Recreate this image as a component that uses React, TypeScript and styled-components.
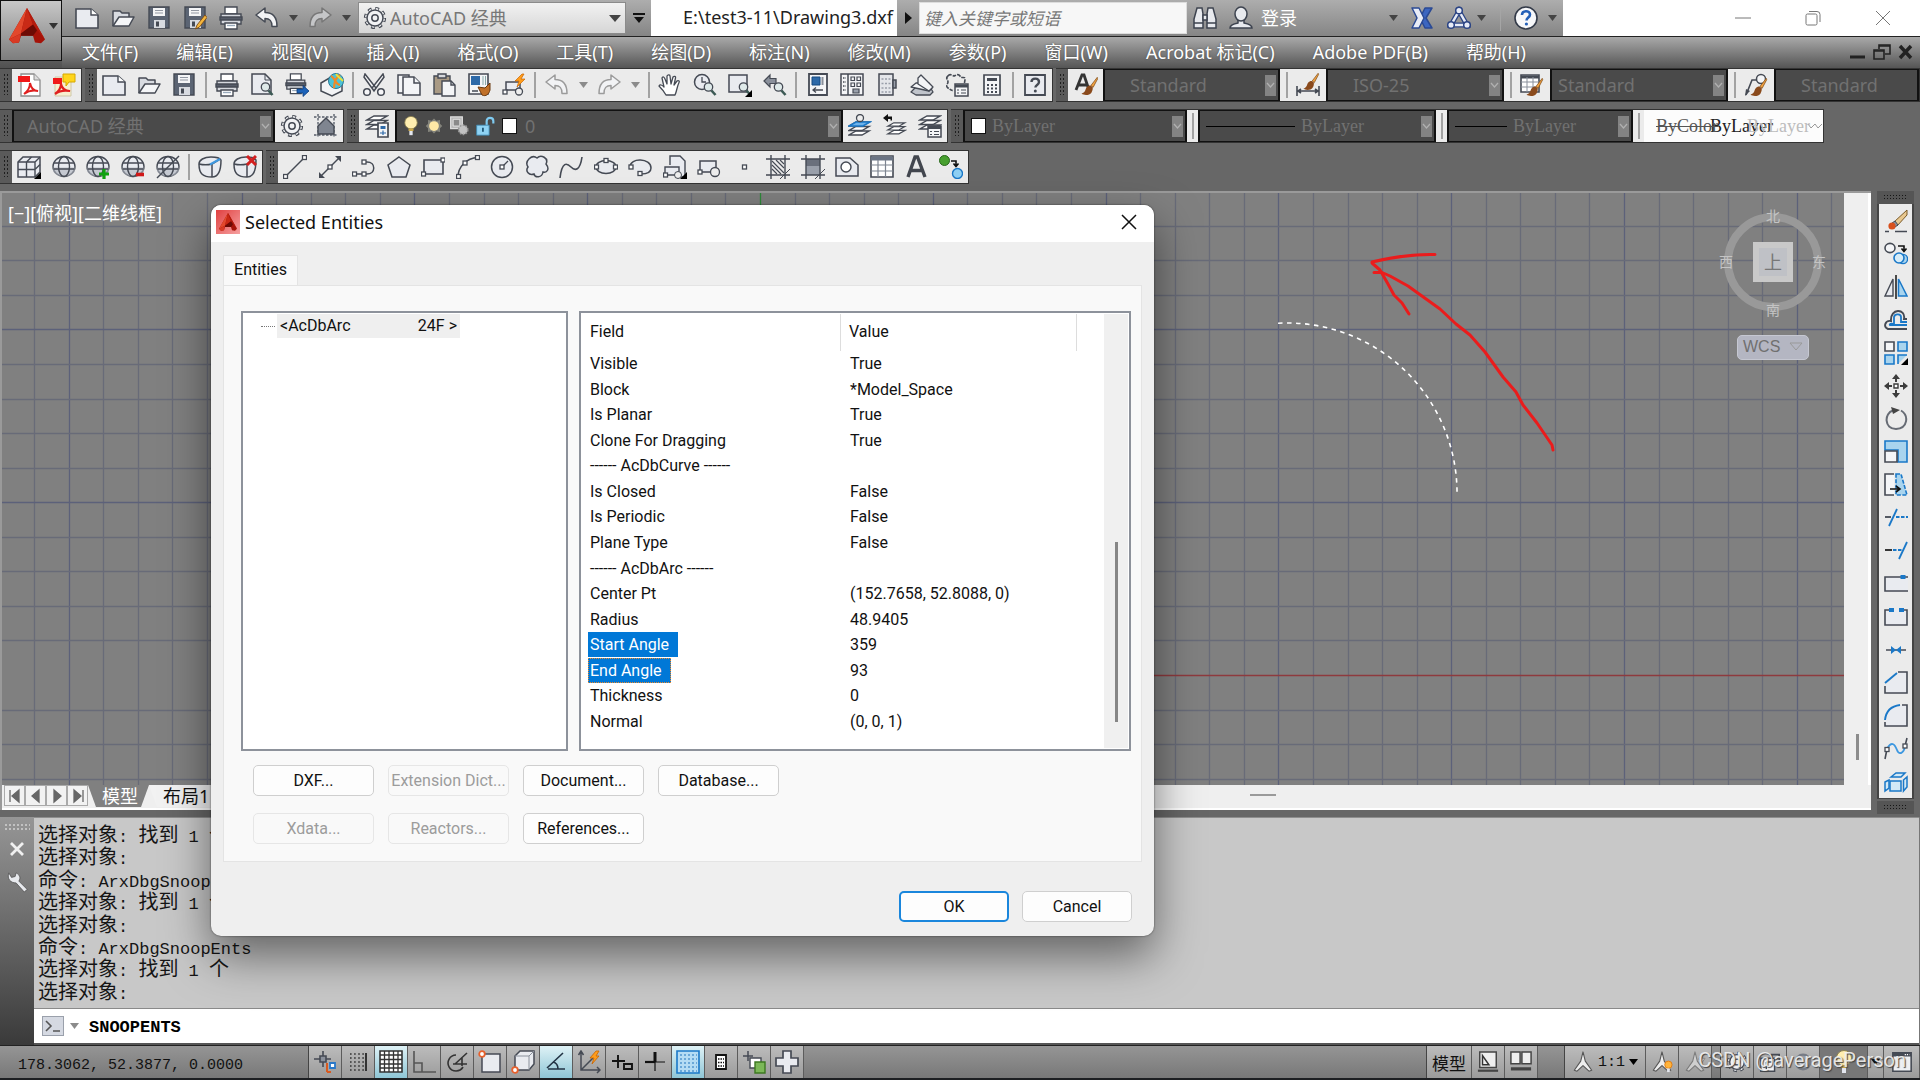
import React from "react";
import styled, { createGlobalStyle, css } from "styled-components";

const UI = `"Noto Sans", "Noto Sans CJK SC", sans-serif`;
const DLG = `Roboto, "Noto Sans CJK SC", sans-serif`;
const MONO = `"Liberation Mono", "Noto Sans CJK SC", monospace`;
const SERIF = `"Liberation Serif", "Noto Sans CJK SC", serif`;

const GlobalStyle = createGlobalStyle`
  * { box-sizing: border-box; }
  html, body { margin: 0; padding: 0; }
  body { background: #676767; font-family: ${UI}; overflow: hidden; }
  button, input, select { font: inherit; color: inherit; margin: 0; padding: 0; border: 0; background: none; border-radius: 0; }
  button { cursor: pointer; }
  svg { display: block; flex: none; }
`;

/* ---------- icon artwork, 24 x 24 ---------- */

const K = "#454a54";
const F = "#e9ebf0";
const B = "#1a78c8";
const LB = "#a9d4ee";
const sq = (x: number, y: number, s = 4) => (
  <rect x={x - s / 2} y={y - s / 2} width={s} height={s} fill="#fff" stroke={K} strokeWidth="1.3" />
);
const lens = (
  <g>
    <circle cx="15.5" cy="14" r="4.2" fill="#dfeaea" stroke={K} strokeWidth="1.3" />
    <path d="M18.5 17.5l4 4.5" stroke="#3d5a55" strokeWidth="2.6" />
  </g>
);
const corner = <path d="M24 17v7h-7z" fill="#000" />;
const brush = (
  <g>
    <path d="M22.5 1.5l-7 9 2.5 2L23 3z" fill="#f0a040" stroke="#7a4a18" strokeWidth=".8" />
    <path d="M15 10.500c-4 0-5 3-6 6-1 2-3 3-4 3 3 2.500 9 2 11-1 1.500-2.500 1.500-4 1.500-6z" fill="#8a4a1c" />
  </g>
);
const sphere = (
  <g fill="none" stroke={K} strokeWidth="1.4">
    <ellipse cx="12" cy="11.500" rx="11" ry="10" fill={F} />
    <path d="M1 12.500h22v4c-3 4-7 5-11 5s-8-1-11-5z" fill="#aeb3bd" stroke="none" opacity=".6" />
    <ellipse cx="12" cy="11.500" rx="5.500" ry="10" />
    <path d="M2 8h20M1.500 14h21" />
  </g>
);
const page = (
  <g>
    <path d="M1 3h15l7 6v13H1z" fill={F} stroke={K} strokeWidth="1.6" />
    <path d="M16 3v6h7" fill="#fff" stroke={K} strokeWidth="1.400" />
  </g>
);
const floppy = (
  <g>
    <path d="M2 1h20v21H2z" fill="#5b6473" stroke={K} strokeWidth="1.400" />
    <path d="M6 2h12v8H6z" fill="#f3f4f6" />
    <path d="M8 4.500h8M8 7h8" stroke="#9298a3" />
    <path d="M7 14h11v8H7z" fill="#d8dbe1" />
    <path d="M9 15.500h3v5H9z" fill={K} />
  </g>
);
const printer = (
  <g stroke={K} strokeWidth="1.400">
    <path d="M6 1h12v7H6z" fill="#fff" />
    <path d="M2 8h20v10H2z" fill="#d5d8de" />
    <path d="M1 11h22v3H1z" fill="#565c68" />
    <path d="M6 17h12v6H6z" fill="#fff" />
    <path d="M8 19.500h8" stroke="#9ab" />
  </g>
);
const layers = (
  <g fill="#fff" stroke={K} strokeWidth="1.400">
    <path d="M1 21h13l7-4H8z" />
    <path d="M1 16.500h13l7-4H8z" />
    <path d="M1 12h13l7-4H8z" />
  </g>
);
const person = (
  <path d="M12 1l2.500 10 7 10-3 1-6.500-6-6.500 6-3-1 7-10z" fill="#eee" stroke="#555" strokeWidth="1.200" strokeLinejoin="round" />
);
const gear = (
  <g fill="none" stroke={K}>
    <circle cx="12" cy="12" r="9.600" strokeWidth="3" strokeDasharray="3.800 3.740" />
    <circle cx="12" cy="12" r="8" fill="#f1f2f4" strokeWidth="1.500" />
    <circle cx="12" cy="12" r="9.300" stroke="#f1f2f4" strokeWidth="1.300" strokeDasharray="2.400 4.900" strokeDashoffset="-.7" />
    <circle cx="12" cy="12" r="3.200" strokeWidth="1.500" />
  </g>
);
const cube = (
  <g fill={F} stroke={K} strokeWidth="1.500" strokeLinejoin="round">
    <path d="M1 9c0-4 5-7 12-7 5 0 9 1 10 3 0 8-2 17-9 17C5 22 1 19 1 9z" />
    <path d="M1 9c4 1 9 1 13 0v13M14 9l8-5" fill="none" />
  </g>
);
const hatchFrame = <path d="M5 0v24M19 0v24M0 4h24M0 20h24" stroke={K} strokeWidth="1.400" fill="none" />;

const icons: Record<string, React.ReactNode> = {
  page, floppy, printer, gear, sphere,
  folder: (
    <g stroke={K} strokeWidth="1.500" strokeLinejoin="round">
      <path d="M2 20V5h7l2 2h7v4" fill="#d8dbe1" />
      <path d="M2 20l6-9h15l-5 9z" fill="#f4f5f7" />
    </g>
  ),
  saveAs: <g>{floppy}<path d="M22 9l-8 10-1.500 4 4-2 7.500-9.500z" fill="#f4b63c" stroke="#7a4a18" strokeWidth=".9" /></g>,
  undo: <path d="M1 9l9-7v4.500c8 0 12 4 12 14h-5c0-6-2-8-7-8V16z" fill="#f2f3f5" stroke={K} strokeWidth="1.500" strokeLinejoin="round" />,
  redo: <path d="M23 9l-9-7v4.500c-8 0-12 4-12 14h5c0-6 2-8 7-8V16z" fill="#c5c6c8" stroke="#777" strokeWidth="1.500" strokeLinejoin="round" />,
  undoOff: <path d="M1 9l9-7v4.500c8 0 12 4 12 14h-5c0-6-2-8-7-8V16z" fill="#f2f3f5" stroke="#9b9b9b" strokeWidth="1.500" strokeLinejoin="round" />,
  redoOff: <path d="M23 9l-9-7v4.500c-8 0-12 4-12 14h5c0-6 2-8 7-8V16z" fill="#f2f3f5" stroke="#9b9b9b" strokeWidth="1.500" strokeLinejoin="round" />,
  binoculars: (
    <g fill="#e8eaee" stroke="#3d434f" strokeWidth="1.500">
      <path d="M4 2h5l1 6v14H1v-9zM20 2h-5l-1 6v14h9v-9z" />
      <path d="M10 9h4v5h-4zM1 17h9M14 17h9" />
    </g>
  ),
  user: (
    <g fill="#e8eaee" stroke="#3d434f" strokeWidth="1.500">
      <path d="M1 22c0-3 3-4 8-5v-3h6v3c5 1 8 2 8 5z" />
      <ellipse cx="12" cy="8" rx="6" ry="7" />
    </g>
  ),
  exchange: (
    <g strokeLinejoin="round">
      <path d="M15 2h7l-6 10 6 10h-7l-5-10z" fill="#3c66c0" stroke="#2b4a94" strokeWidth="1.500" />
      <path d="M2 2h7l5 10-5 10H2l5-10z" fill="#e8ecf6" stroke="#2b4a94" strokeWidth="1.500" />
    </g>
  ),
  a360: (
    <g fill="#e8ecf6" stroke="#2b4484" strokeWidth="1.500">
      <path d="M12 5L4 19h16z" fill="none" strokeWidth="5" />
      <path d="M12 5L4 19h16z" fill="none" stroke="#e8ecf6" strokeWidth="2.500" />
      <circle cx="12" cy="4.500" r="3.300" /><circle cx="4" cy="19" r="3.300" /><circle cx="20" cy="19" r="3.300" />
    </g>
  ),
  help: (
    <g>
      <ellipse cx="12" cy="12" rx="11" ry="11" fill="#f7f8fa" stroke="#333a48" strokeWidth="1.600" />
      <path d="M8 9c0-5 8-5 8-.5 0 3-3.500 3-3.500 6" fill="none" stroke="#2460b8" strokeWidth="2.600" />
      <circle cx="12.400" cy="18" r="1.600" fill="#2460b8" />
    </g>
  ),
  helpBox: (
    <g>
      <path d="M2 2h20v20H2z" fill={F} stroke={K} strokeWidth="1.800" />
      <path d="M8.500 9c0-4.500 7.500-4.500 7.500 0 0 3-3.600 3-3.600 5.500" fill="none" stroke={K} strokeWidth="2.400" />
      <circle cx="12.300" cy="18" r="1.500" fill={K} />
    </g>
  ),
  pdf: (
    <g>
      <path d="M4 1h13l6 6v16H4z" fill="#fff" stroke="#8c8c8c" strokeWidth="1.300" />
      <path d="M17 1v6h6" fill="#ddd" stroke="#8c8c8c" />
      <path d="M1 3h12v6H1z" fill="#f01818" />
      <path d="M7 21c4-3 6-7 6-11 1 5 4 8 8 8-5-1-10 0-14 3z" fill="none" stroke="#e02020" strokeWidth="2" />
    </g>
  ),
  pdfNote: (
    <g>
      <path d="M3 4h16v19H3z" fill="#f7efcf" stroke="#cfc8a8" />
      <path d="M1 5h9v6H1z" fill="#f01818" />
      <path d="M3 21c4-3 6-6 6-10 1 5 4 7 9 7-5-1-11 0-15 3z" fill="none" stroke="#e02020" strokeWidth="2.200" />
      <path d="M11 1h12v8h-6l-3 4V9h-3z" fill="#ffd51c" stroke="#d6a800" />
    </g>
  ),
  preview: <g><path d="M2 1h13l6 6v14H2z" fill={F} stroke={K} strokeWidth="1.500" /><path d="M15 1v6h6" fill="none" stroke={K} />{lens}</g>,
  publish: <g><g transform="scale(.9)">{printer}</g><path d="M12 16h6v-3.500l6 5.500-6 5.500V20h-6z" fill="#1c62b8" stroke="#0d3c7c" strokeWidth=".8" /></g>,
  web: (
    <g>
      <path d="M1 10l10-6 11 5v9l-10 5-11-5z" fill="#f3f4f6" stroke={K} strokeWidth="1.500" />
      <circle cx="16" cy="8" r="7.500" fill="#4cc3d8" stroke="#2a7896" />
      <path d="M11 3c4 2 4 8 9 9M20 2c-5 3-6 8-6 13" stroke="#f08a28" strokeWidth="2.200" fill="none" />
      <path d="M16 1c2 3 5 5 7 7" stroke="#e8e23a" strokeWidth="2" fill="none" />
    </g>
  ),
  cut: (
    <g stroke={K} strokeWidth="1.500" fill="#f6f6f8">
      <path d="M3 1l11 14-2 3L2 4zM21 1L10 15l2 3L22 4z" />
      <circle cx="5" cy="19" r="3.300" /><circle cx="19" cy="19" r="3.300" />
    </g>
  ),
  copy: (
    <g fill="#f4f5f7" stroke={K} strokeWidth="1.500">
      <path d="M1 2h11v18H1z" /><path d="M6 4h11l6 6v12H6z" /><path d="M17 4v6h6" />
    </g>
  ),
  paste: (
    <g stroke={K} strokeWidth="1.400">
      <path d="M2 3h16v18H2z" fill="#a99a84" /><path d="M6 1h8v4H6z" fill="#d6d8dc" />
      <path d="M10 8h9l4 4v11H10z" fill="#f4f5f7" /><path d="M19 8v4h4" fill="none" />
    </g>
  ),
  match: (
    <g>
      <path d="M2 1h19v20H2z" fill="#f4f5f7" stroke={K} strokeWidth="1.600" />
      <path d="M4 3h9v9H4z" fill="#2d69a8" /><path d="M16 3v9M18.500 3v9" stroke="#8aa" />
      <path d="M5 18h6" stroke={K} strokeWidth="1.500" />
      <path d="M23 10l-5 5-7-1 4 8c4 2 7-1 8-5z" fill="#c07028" stroke="#6b3a10" />
    </g>
  ),
  blockEdit: (
    <g>
      <path d="M4 9h14v8H4z" fill={F} stroke={K} strokeWidth="1.500" />{sq(3, 19)}
      <circle cx="17" cy="18.500" r="3.500" fill="#eee" stroke={K} strokeWidth="1.300" />
      <path d="M20 1l-7 7h4l-2 6 8-8h-4l3-5z" fill="#ff9d1c" stroke="#c86400" strokeWidth=".7" />
    </g>
  ),
  hand: <path d="M8 22c-2-4-5-7-7-9 1-2 3-1 5 1L4 5c1-2 2-1 3 1l2 5V3c1-2 3-1 3 0l1 8 2-7c1-1 3-1 2.500 1L16 12l3-4c1-1 3 0 2 1.500-2 4-2 8-4 12.500z" fill="#fff" stroke={K} strokeWidth="1.300" strokeLinejoin="round" />,
  zoomRt: <g><circle cx="9" cy="9" r="7.500" fill={F} stroke={K} strokeWidth="1.500" /><path d="M9 4v5h4" fill="none" stroke={K} strokeWidth="1.300" />{lens}</g>,
  zoomWin: <g><path d="M1 2h18v17H1z" fill={F} stroke={K} strokeWidth="1.500" />{lens}{corner}</g>,
  zoomPrev: <g><path d="M1 8l6-6v3.500h6v5H7V14z" fill="#8a909b" stroke={K} strokeWidth="1.200" />{lens}</g>,
  props: (
    <g>
      <path d="M3 1h18v21H3z" fill="#f4f5f7" stroke={K} strokeWidth="1.800" /><path d="M6 4h8v8H6z" fill="#2d69a8" stroke="#174a80" />
      <path d="M16.500 4v8" stroke="#8a909b" strokeWidth="2" /><path d="M7 17h10M10 14.500L7 17l3 2.500" fill="none" stroke={K} strokeWidth="1.300" />
    </g>
  ),
  dcenter: (
    <g fill="#f4f5f7" stroke={K} strokeWidth="1.500">
      <path d="M1 1h22v21H1z" /><path d="M8 1v21" /><path d="M3 5h3M3 9h3M3 13h3M3 17h3" strokeDasharray="1.500 1" />
      <path d="M11 4h3.500v3.500H11zM17 4h3.500v3.500H17zM11 10h3.500v3.500H11zM17 10h3.500v3.500H17z" strokeWidth="1.200" /><path d="M13 16h6v4h-6z" strokeWidth="1.200" fill="#9aa0ab" />
    </g>
  ),
  palettes: (
    <g stroke={K} fill="#e4e6ea" strokeWidth="1.500">
      <path d="M4 1h14v21H4z" /><path d="M18 7h3v8h-3z" fill="#9aa0ab" />
      <path d="M6.500 6h9M6.500 10.500h9M6.500 15h9M6.500 19h9" strokeDasharray="2 1.500" strokeWidth="1.700" stroke="#9aa0ab" />
    </g>
  ),
  sheets: (
    <g stroke={K} strokeWidth="1.300" fill="#f4f5f7" strokeLinejoin="round">
      <path d="M1 19l5-5h14l3 5-3 3H6z" fill="#c0c4cb" /><path d="M1 14l5-4h13l3 5-3 3z" /><path d="M8 5l3-3 12 12-4 4-11-7z" />
    </g>
  ),
  markup: (
    <g>
      <path d="M3 3c2-3 5 0 6 0s4-3 6 0 5 0 5 3-1 3 0 5M3 3c-3 2 0 4 0 6s-3 4 0 6 3 3 6 2" fill="none" stroke={K} strokeWidth="1.600" strokeDasharray="4 1" />
      <path d="M10 11h13v12H10z" fill="#f4f5f7" stroke={K} strokeWidth="1.500" /><path d="M10 13h13" stroke={K} strokeWidth="3" />
      <path d="M12 17h2M16 17h5M12 20h2M16 20h5" stroke={K} strokeWidth="1.200" />
    </g>
  ),
  calc: (
    <g>
      <path d="M4 2h16v20H4z" fill="#f4f5f7" stroke={K} strokeWidth="1.700" /><path d="M7 5h10v3H7z" fill={K} />
      <path d="M7 12h10M7 15.500h10M7 19h10" stroke={K} strokeWidth="2" strokeDasharray="2 2" />
    </g>
  ),
  textStyle: (
    <g>
      <path d="M2 17L8 2h2l5 15M4 12h9" fill="none" stroke="#333" strokeWidth="2.800" />
      <g transform="translate(3 3) scale(.9)">{brush}</g>
    </g>
  ),
  dimStyle: (
    <g>
      <path d="M1 13v10M23 13v10M2 18h20M5 16l-3 2 3 2M19 16l3 2-3 2" fill="none" stroke={K} strokeWidth="1.600" />
      <g transform="translate(3 -1) scale(.85)">{brush}</g>
    </g>
  ),
  tableStyle: (
    <g>
      <path d="M1 2h18v17H1z" fill="#fff" stroke={K} strokeWidth="1.600" /><path d="M1 4h18" stroke={K} strokeWidth="3" />
      <path d="M1 9h18M1 14h18M7 4v15M13 4v15" stroke="#8a909b" />
      <g transform="translate(2 4) scale(.9)">{brush}</g>
    </g>
  ),
  leaderStyle: (
    <g>
      <path d="M2 22L8 7h5" fill="none" stroke={K} strokeWidth="1.600" /><path d="M1 23l1-7 4 2z" fill={K} /><circle cx="17" cy="6" r="4.500" fill="#f4f5f7" stroke={K} strokeWidth="1.500" />
      <g transform="translate(2 4) scale(.9)">{brush}</g>
    </g>
  ),
  home: (
    <g>
      <path d="M4 0v24M20 0v24M0 3h24M0 21h24" stroke="#7b8089" strokeWidth="1.800" strokeDasharray="2.500 1.500" />
      <path d="M4 12l8-8 8 8v8H4z" fill="#7f8590" stroke={K} strokeWidth="1.400" />
    </g>
  ),
  layerProps: (
    <g>
      <g transform="translate(1 -6)">{layers}</g>
      <path d="M13 9h10v14H13z" fill="#f4f5f7" stroke={K} strokeWidth="1.700" /><path d="M15.500 12h5v3h-5z" fill="#2d69a8" /><path d="M15 19h6M18 16.500v4.500" stroke="#2d69a8" strokeWidth="1.200" />
    </g>
  ),
  layerCurrent: (
    <g>{layers}<path d="M1 12h14l7-4H8z" fill="#6db2ea" stroke={B} strokeWidth="1.500" /><circle cx="12" cy="4" r="3.500" fill="#eee" stroke={K} strokeWidth="1.300" /></g>
  ),
  layerPrev: <g><g transform="translate(4 2) scale(.85)">{layers}</g><path d="M0 4l5-4v2.500h4v4H7.500V5H5v3z" fill="#111" /></g>,
  layerState: (
    <g>
      <g transform="translate(1 -6)">{layers}</g>
      <path d="M10 12h13v11H10z" fill="#f4f5f7" stroke={K} strokeWidth="1.500" /><path d="M10 13.500h13" stroke={K} strokeWidth="3" /><path d="M12 17.500h2M16 17.500h5M12 20.500h2M16 20.500h5" stroke={K} strokeWidth="1.200" />
    </g>
  ),
  bulb: (
    <g>
      <ellipse cx="12" cy="8" rx="7.500" ry="7.500" fill="#ffeeb0" stroke="#8d8250" /><path d="M9 15h6v3H9z" fill="#caa94c" /><path d="M10 18h4v5h-4z" fill="#e3e6ee" />
    </g>
  ),
  sun: <g><path d="M12 2l3 3 5-1v5l3 3-3 3v5l-5-1-3 3-3-3-5 1v-5l-3-3 3-3V4l5 1z" fill="#84847c" /><circle cx="12" cy="12" r="6.500" fill="#ffe9a6" /></g>,
  vpFreeze: (
    <g>
      <path d="M2 1h14v14H2z" fill="#b8b8b8" stroke="#ddd" strokeWidth="1.500" /><path d="M5 4h8v8H5z" fill="#8a8a8a" stroke="#eee" />
      <circle cx="17" cy="16.500" r="5.500" fill="#c2c2c2" stroke="#999" strokeDasharray="2 1.500" strokeWidth="2" />
    </g>
  ),
  unlock: (
    <g>
      <path d="M14 11V6c0-5 8-5 8 0v3" fill="none" stroke="#7fcaf0" strokeWidth="2.600" /><path d="M2 11h15v12H2z" fill="#8fd3f4" stroke="#3c88b0" /><path d="M9.500 14v5" stroke="#205878" strokeWidth="2.200" />
    </g>
  ),
  vportBox: (
    <g>
      <path d="M1 7l5-5h17v15l-5 5H1z" fill={F} stroke={K} strokeWidth="1.500" /><path d="M1 7h17v15M18 7l5-5M9.500 7v15M1 14.500h17M9.500 7l5-5M18 14.500l5-5" fill="none" stroke={K} strokeWidth="1.400" />{corner}
    </g>
  ),
  sphereAdd: <g>{sphere}<path d="M18 14v10M13 19h10" stroke="#10a010" strokeWidth="3.200" /></g>,
  sphereSub: <g>{sphere}<path d="M15 19.500h8" stroke="#d01818" strokeWidth="3.600" /></g>,
  sphereOff: <g>{sphere}<path d="M1 23L23 1" stroke={K} strokeWidth="1.500" /></g>,
  cubeBlue: <g>{cube}<path d="M12 9.500L22 4" stroke="#3e98e0" strokeWidth="2" /></g>,
  cubeDel: <g>{cube}<path d="M14 1l9 9M23 1l-9 9" stroke="#d32020" strokeWidth="3" /></g>,
  line: <g><path d="M3 21L21 3" stroke={K} strokeWidth="1.500" />{sq(2.500, 21.500)}{sq(21.500, 2.500)}</g>,
  ray: <g><path d="M2 22L22 2" stroke={K} strokeWidth="1.500" />{sq(12, 12)}<path d="M23 1v6l-6-6zM1 23v-6l6 6z" fill={K} /></g>,
  pline: <g><path d="M2 19h13c9 0 9-12 0-12h-3" fill="none" stroke={K} strokeWidth="1.500" />{sq(2.500, 19)}{sq(12, 19)}{sq(12, 7)}</g>,
  polygon: <path d="M12 2l11 8-4 12H5L1 10z" fill={F} stroke={K} strokeWidth="1.500" />,
  rect: <g><path d="M3 5h19v14H3z" fill={F} stroke={K} strokeWidth="1.600" />{sq(2.500, 19)}{sq(22, 5)}</g>,
  arc: <g><path d="M2 22C2 12 10 3 22 2.500" fill="none" stroke={K} strokeWidth="1.500" />{sq(2.500, 21.500)}{sq(9, 8)}{sq(21.500, 2.500)}</g>,
  circle: <g><circle cx="12" cy="12" r="10.500" fill={F} stroke={K} strokeWidth="1.500" /><path d="M12 12l6-6" stroke={K} strokeWidth="1.300" />{sq(12, 12)}</g>,
  cloud: <path d="M12 3c4-4 12 0 9 6 4 5 1 9-3 8-1 6-8 6-9 2-5 2-9-3-6-7-4-6 4-13 9-9z" fill={F} stroke={K} strokeWidth="1.500" />,
  spline: <path d="M1 23C3 6 8 8 12 12s9 4 11-10" fill="none" stroke={K} strokeWidth="1.600" />,
  ellipse: <g><ellipse cx="12" cy="12" rx="10" ry="6.500" fill={F} stroke={K} strokeWidth="1.500" />{sq(2.500, 12)}{sq(21.500, 12)}{sq(12, 5.500)}</g>,
  ellArc: <g><path d="M2 12c0-10 21-9 21 1 0 5-6 6-10 6" fill={F} stroke={K} strokeWidth="1.500" />{sq(3, 12)}{sq(12, 18.500)}</g>,
  insert: <g><path d="M7 10V1h10l5 5v16H12" fill={F} stroke={K} strokeWidth="1.400" /><path d="M2 12h14v8H2z" fill={F} stroke={K} strokeWidth="1.400" />{sq(2.500, 20)}<circle cx="15" cy="20" r="3.500" fill="#eee" stroke={K} />{corner}</g>,
  block: <g><path d="M3 6h16v11H3z" fill={F} stroke={K} strokeWidth="1.500" />{sq(3, 17)}<circle cx="18" cy="17" r="4.500" fill="#eee" stroke={K} strokeWidth="1.300" /></g>,
  point: <rect x="10.500" y="10" width="4" height="4" fill="#fff" stroke={K} strokeWidth="1.300" />,
  hatch: <g>{hatchFrame}<path d="M6 6l12 12M6 10l9 9M6 14l5 5M10 5l8 8M14 5l4 4" stroke={K} strokeWidth="1.100" /><path d="M24 14L14 24" stroke={K} /></g>,
  gradient: <g><path d="M5 4h14v16H5z" fill="#9aa0ab" /><path d="M5 4h14v7H5z" fill="#6a707c" />{hatchFrame}<path d="M24 14L14 24" stroke={K} /></g>,
  region: <g><path d="M1 3h14l8 7v11H1z" fill={F} stroke={K} strokeWidth="1.500" /><circle cx="11" cy="12" r="5" fill="#fff" stroke={K} strokeWidth="1.400" /></g>,
  table: <g><path d="M1 1h22v21H1z" fill="#fff" stroke={K} strokeWidth="1.600" /><path d="M1 3.500h22" stroke="#6b7484" strokeWidth="4" /><path d="M1 10h22M1 16h22M8 5v17M15.500 5v17" stroke="#7d8490" strokeWidth="1.200" /></g>,
  mtext: <path d="M4 22L11 2h2.500L21 22M7 15.500h11" fill="none" stroke="#43474f" strokeWidth="3.400" />,
  addSel: <g><circle cx="5.500" cy="5.500" r="5" fill="#48a030" stroke="#27661a" /><circle cx="18.500" cy="18.500" r="5" fill="#8fd0f4" stroke={B} strokeWidth="1.400" /><path d="M12 6h5v5M14.500 8.500l2.500 3 2.500-3" fill="none" stroke="#111" strokeWidth="1.600" /></g>,
  erase: <g><path d="M23 1L10 13l3 4L23 6z" fill="#e8c890" stroke="#7a5a28" /><path d="M11 12l-3 2 3 4 3-2z" fill="#8a909b" stroke={K} /><ellipse cx="8" cy="17" rx="3.600" ry="3.600" fill="#d8501c" /><path d="M1 22.500h4M11 22.500h12" stroke={K} strokeWidth="1.400" /></g>,
  copyObj: <g><ellipse cx="6" cy="6" rx="5" ry="4.600" fill="#f4f5f7" stroke={K} strokeWidth="1.600" /><circle cx="19" cy="17" r="4.600" fill={LB} stroke={B} strokeWidth="1.400" /><circle cx="15" cy="16" r="5" fill="#d6ecf8" stroke={B} strokeWidth="1.600" /><path d="M14 4h6v4M17.500 6.500L20 9.500l2.500-3" fill="none" stroke="#111" strokeWidth="1.600" /></g>,
  mirror: <g><path d="M9 4v17H1z" fill={F} stroke={K} strokeWidth="1.400" /><path d="M14.500 4v17H23z" fill={LB} stroke={B} strokeWidth="1.500" /><path d="M12 0v24" stroke="#222" strokeWidth="1.600" /></g>,
  offset: <g fill="none"><path d="M23 21H4c-5-2-3-9 3-8-1-13 15-13 13-2h3" stroke={K} strokeWidth="1.900" /><path d="M23 17H6c-1-1 1-2 4-1V9c1-4 7-3 7 0v5h6" stroke={B} strokeWidth="1.800" /></g>,
  array: <g strokeWidth="1.600"><path d="M1 1h9v9H1z" fill="#f4f5f7" stroke={K} /><path d="M14 1h9v9h-9zM1 14h9v9H1z" fill={LB} stroke={B} /><path d="M14 23v-9h9" fill={LB} stroke={B} /><path d="M24 17v7h-7z" fill="#000" /></g>,
  move: <g fill="#3c3c3c"><path d="M12 0l4 5h-3v3h-2V5H8zM12 24l4-5h-3v-3h-2v3H8zM0 12l5-4v3h3v2H5v3zM24 12l-5-4v3h-3v2h3v3z" /><path d="M10 10h4v4h-4z" fill="#fff" stroke="#3c3c3c" strokeWidth="1.400" /></g>,
  rotate: <g><path d="M17 3.500c8 5 7 18-5 18.500C0 22 0 6 9 3.500" fill="none" stroke="#666b74" strokeWidth="2" /><path d="M7 0l9 3-7 4z" fill="#444" /></g>,
  scale: <g strokeWidth="1.600"><path d="M1 1h22v21H14V10H1z" fill={LB} stroke={B} /><path d="M1 11h12v11H1z" fill="#f4f5f7" stroke={K} /></g>,
  stretch: <g strokeWidth="1.600"><path d="M10 1H1v21h9" fill="#f4f5f7" stroke={K} /><path d="M12 1h5l6 21H12z" fill={LB} stroke={B} strokeDasharray="4 1.500" /><path d="M6 16h9M12 13l4 3-4 3" fill="none" stroke="#111" /></g>,
  trim: <g strokeWidth="1.800" fill="none"><path d="M1 11h6" stroke={K} /><path d="M12 11h12" stroke={B} strokeDasharray="3.500 1.500" /><path d="M13 3L5 20" stroke={B} /></g>,
  extend: <g strokeWidth="1.800" fill="none"><path d="M1 11h7" stroke="#222" /><path d="M9 11h9" stroke={B} strokeDasharray="3.500 1.500" /><path d="M23 3l-8 17" stroke={B} /></g>,
  breakPt: <g><path d="M24 5H1v14h23" fill={F} stroke={K} strokeWidth="1.600" /><path d="M16.500 3h5v4h-5z" fill={B} /></g>,
  breakObj: <g><path d="M5 5H1v15h22V5h-4" fill={F} stroke={K} strokeWidth="1.600" /><path d="M5 3h5v4H5zM15 3h5v4h-5z" fill={B} /></g>,
  join: <g><path d="M2 12h20" stroke={K} strokeWidth="1.500" /><path d="M7 8l5 4-5 4zM17 8l-5 4 5 4z" fill={B} /></g>,
  chamfer: <g><path d="M14 1h9v21H1v-7L14 3z" fill={F} /><path d="M14 1h9v21H1v-7" fill="none" stroke={K} strokeWidth="1.600" /><path d="M1 12L13 2" stroke={B} strokeWidth="1.900" /></g>,
  fillet: <g><path d="M16 1h7v21H1v-5C2 8 8 2 16 1z" fill={F} /><path d="M18 1h5v21H1v-4" fill="none" stroke={K} strokeWidth="1.600" /><path d="M1 16C2 7 8 2 16 1" fill="none" stroke={B} strokeWidth="1.900" /></g>,
  blend: <g fill="none"><path d="M1 22l2-10M21 9l2-8" stroke={K} strokeWidth="1.600" /><path d="M3 12c5-9 8-4 10 1s6 4 8-3" stroke="#3e98e0" strokeWidth="1.900" />{sq(3, 12.500)}{sq(21, 9)}</g>,
  explode: <g fill="#d3e9f6" stroke={B} strokeWidth="1.500"><path d="M1 12l4-2v8l-4 3zM19.500 10l3.500-3v10l-3.500 4zM7 7l5-4h9l-4 4z" /><path d="M6 11h11v10H6z" /></g>,
  snapInfer: <g fill="none"><path d="M10 1v16M1 9h17" stroke={K} strokeWidth="1.600" /><path d="M7 6h6v6H7z" stroke={K} strokeWidth="1.600" fill="#8a909b" /><path d="M14 22v-9M14 22h4" stroke="#d85a20" strokeWidth="2" /><path d="M17 13h5v5h-5z" stroke="#2a78c8" strokeWidth="1.800" fill="#fff" /></g>,
  snapMode: <g><path d="M4 4h14M4 8h14M4 12h14M4 16h14M4 20h14" stroke="#333" strokeWidth="1.600" strokeDasharray="1.600 2.500" /><path d="M20 3v18" stroke="#333" strokeWidth="2" /></g>,
  gridMode: <g><path d="M1 1h22v21H1z" fill="#fff" stroke="#333" strokeWidth="1.600" /><path d="M5.500 1v21M10 1v21M14.500 1v21M19 1v21M1 5h22M1 9.500h22M1 14h22M1 18h22" stroke="#333" strokeWidth="1.300" /></g>,
  ortho: <path d="M2 1v21h22M2 13h8v9" fill="none" stroke="#555" strokeWidth="1.600" />,
  polar: <g fill="none" stroke="#333" strokeWidth="1.600"><path d="M11 5a8 8 0 1 0 7 12" /><path d="M10 14L22 3M8 14h14M17 7v9" /></g>,
  osnap: <g><path d="M4 4h18v18H4z" fill={F} stroke={K} strokeWidth="1.500" /><circle cx="4" cy="4" r="2.800" fill="#fff" stroke="#e8602c" strokeWidth="1.800" /></g>,
  osnap3d: <g><path d="M4 6l5-5h14v13l-5 6H4z" fill={F} stroke={K} strokeWidth="1.500" /><path d="M4 6h14v14M18 6l5-5" fill="none" stroke="#8a909b" /><circle cx="4" cy="20" r="2.800" fill="#fff" stroke="#e8602c" strokeWidth="1.800" /></g>,
  otrack: <path d="M3 18L19 3M4 19h17M9 12c4 1 5 4 5 7" fill="none" stroke="#234" strokeWidth="1.600" />,
  ducs: <g fill="none"><path d="M4 2v18h19M4 20L16 8M1.500 5L4 1l2.500 4M20 17l3 3-3 3" stroke={K} strokeWidth="1.500" /><path d="M19 1l-6 7h4l-2 6 7-8h-3l3-5z" fill="#ff9d1c" stroke="#c86400" strokeWidth=".8" /></g>,
  dyn: <path d="M8 5v13M2 11h13M14 14h8v5h-8z" fill="none" stroke="#111" strokeWidth="1.900" />,
  lwt: <g fill="none" stroke="#111"><path d="M12 2v10" strokeWidth="3" /><path d="M12 12v9M12 12h10" strokeWidth="1.200" /><path d="M2 12h10" strokeWidth="2.200" /></g>,
  transp: <g><path d="M1 1h22v22H1z" fill="#b4dcf4" stroke={B} strokeWidth="1.600" /><path d="M4 5h17M4 9h17M4 13h17M4 17h17M4 21h17" stroke="#6aa8d8" strokeWidth="2" strokeDasharray="2 2" /></g>,
  quickProps: <g><path d="M7 5h10v14H7z" fill="#fff" stroke="#111" strokeWidth="1.800" /><path d="M9 9h6M9 12.500h6M9 16h6" stroke="#111" strokeWidth="1.700" strokeDasharray="1.500 1" /></g>,
  selCycle: <g><path d="M6 1v10M1 6h10" stroke={K} strokeWidth="1.500" /><path d="M8 8h11v10H8z" fill="#fff" stroke={K} strokeWidth="1.400" /><path d="M13 12h10v11H13z" fill="#7cb858" stroke="#3c7820" strokeWidth="1.400" /></g>,
  annoMon: <path d="M8 1h8v7h7v8h-7v7H8v-7H1V8h7z" fill={F} stroke={K} strokeWidth="1.700" />,
  layoutBtn: <g><path d="M3 1h18v17H3z" fill="#eee" stroke="#444" strokeWidth="1.600" /><path d="M6 5v10h7z" fill="none" stroke="#333" strokeWidth="1.600" /><path d="M1 21.500h22" stroke="#444" strokeWidth="2.400" /></g>,
  qview: <g><path d="M1 1h10v13H1zM13 1h10v13H13z" fill="#eee" stroke="#444" strokeWidth="1.600" /><path d="M1 19.500h22" stroke="#444" strokeWidth="3.500" /></g>,
  person,
  personSun: <g>{person}<circle cx="19" cy="15" r="4" fill="#ffb43c" stroke="#e07a10" /><path d="M17.500 19h3v4h-3z" fill="#e3e6ee" /></g>,
  personOff: <g opacity=".55">{person}<path d="M20 3l-4 6h3l-1 6 5-7h-3z" fill="#ddd" stroke="#666" /></g>,
  lockUi: <g><path d="M2 8h15v14H2z" fill="#f4f5f7" stroke={K} strokeWidth="1.600" /><path d="M8 12h6M8 12v8" stroke={K} strokeWidth="1.500" /><path d="M14 8V4h8v8" fill="none" stroke={K} strokeWidth="1.800" /></g>,
  hardware: <g><circle cx="12" cy="12" r="8" fill="#9aa0a8" stroke="#777c86" strokeWidth="2.500" /><path d="M8 12l3 4 6-8" stroke="#ccd0d6" strokeWidth="2" fill="none" /></g>,
  cleanScreen: <g><path d="M2 2h20v20H2z" fill="#eef0f3" stroke={K} strokeWidth="1.700" /><path d="M2 4h20" stroke={K} strokeWidth="4" /><path d="M15 4h5" stroke="#fff" strokeWidth="1.500" strokeDasharray="1.300 1" /></g>,
  wrench: <path d="M3 2l3 5 4-1 1-4c5 3 5 6 3 9l9 9-3 3-9-10C5 13 1 9 3 2z" fill="#e8eaee" stroke="#4b4b4b" strokeWidth=".8" />,
};

const Icon = ({ name, size = 24 }: { name: string; size?: number }) => (
  <svg width={size} height={size} viewBox="0 0 24 24" aria-hidden="true">{icons[name]}</svg>
);

const Logo = ({ size }: { size: number }) => (
  <svg width={size} height={size} viewBox="0 0 36 48" preserveAspectRatio="none" aria-hidden="true">
    <path d="M18 0L36 42l-4 5-6-1-2-9H12l-2 9-6 1-4-5z" fill="#a51208" />
    <path d="M18 0L0 42l12-8z" fill="#e2482c" />
    <path d="M18 0l-6 34 12-12z" fill="#c92a16" />
    <path d="M18 0l6 22 12 20z" fill="#b41c0e" />
    <path d="M12 34l12-12 4 8-4 7H12z" fill="#6c0a04" />
    <path d="M0 42l12-8-2 12-6 1z" fill="#d83a24" />
  </svg>
);

/* ---------- page and header ---------- */

const Page = styled.div`
  position: relative;
  display: flex;
  flex-direction: column;
  height: 100vh;
  background: #676767;
`;
const Header = styled.header`
  display: grid;
  grid-template-columns: 62px 1fr;
  grid-template-rows: 37px 31px;
  background: linear-gradient(#b0b0b0, #505050);
`;
const AppButton = styled.button`
  grid-row: 1 / 3;
  display: flex;
  align-items: center;
  justify-content: center;
  gap: 4px;
  height: 61px;
  padding: 0 0 10px 4px;
  border: 1px solid #111;
  background: linear-gradient(#c8c8c8, #7d7d7d);
`;
const TitleBar = styled.div`
  display: flex;
  height: 37px;
  border-bottom: 1px solid #222;
  background: linear-gradient(#adadad, #858585);
`;
const QuickAccess = styled.div`
  display: flex;
  align-items: center;
  padding: 0 3px 0 7px;
`;
const QuickButton = styled.button<{ $w?: number }>`
  display: flex;
  align-items: center;
  justify-content: center;
  width: ${(p) => p.$w ?? 36}px;
  height: 36px;
`;
const WorkspaceBox = styled.label`
  display: flex;
  align-items: center;
  width: 268px;
  height: 32px;
  margin-top: 2px;
  padding: 0 4px;
  gap: 3px;
  background: linear-gradient(#f2f2f2, #d6d6d6);
  border: 1px solid #8b8b8b;
`;
const WorkspaceSelect = styled.select`
  appearance: none;
  flex: 1;
  height: 28px;
  font-size: 18px;
  color: #777;
`;
const FileName = styled.div`
  width: 246px;
  padding-right: 4px;
  background: #fff;
  color: #222;
  font-size: 18px;
  line-height: 34px;
  text-align: right;
  white-space: nowrap;
`;
const SearchInput = styled.input`
  width: 268px;
  height: 32px;
  margin-top: 2px;
  padding: 0 4px;
  border: 1px solid #ddd;
  background: #f7f7f7;
  font-size: 17px;
  font-style: italic;
  &::placeholder { color: #777; opacity: 1; }
`;
const SignIn = styled.button`
  width: 126px;
  padding: 0 0 3px 2px;
  color: #fff;
  font-size: 18px;
  text-align: left;
`;
const BarSeparator = styled.span`
  width: 1px;
  height: 26px;
  margin: 5px 7px 0 12px;
  background: #a5a5a5;
`;
const WindowButtons = styled.div`
  display: flex;
  flex: 1;
  justify-content: flex-end;
  padding-right: 2px;
  margin-left: 2px;
  background: #fff;
`;
const MenuBar = styled.nav`
  display: flex;
  align-items: center;
  gap: 38px;
  padding: 0 6px 2px 20px;
  background: linear-gradient(#a9a9a9, #555);
`;
const MenuItem = styled.button`
  color: #fff;
  font-size: 18px;
  line-height: 28px;
  white-space: nowrap;
  text-shadow: 0 0 2px #4a4a4a;
`;
const MdiButtons = styled.div`
  display: flex;
  gap: 7px;
  margin-left: auto;
`;

/* ---------- toolbars ---------- */

const ToolRows = styled.div`
  display: flex;
  flex-direction: column;
  gap: 7px;
  padding-bottom: 7px;
`;
const ToolRow = styled.div`
  display: flex;
  gap: 3px;
  height: 34px;
`;
const Panel = styled.div<{ $w?: number }>`
  display: flex;
  ${(p) => (p.$w ? css`width: ${p.$w}px;` : css`flex: 1;`)}
  min-width: 0;
  border: 1px solid #333;
  border-left-width: 0;
  background: #ebebeb;
`;
const Grip = styled.span`
  flex: none;
  width: 12px;
  background: radial-gradient(circle, #1e1e1e 1px, transparent 1px) 0 0 / 3px 4px, #5a5a5a;
  border: solid #5a5a5a;
  border-width: 4px 3px 6px 3px;
`;
const ToolCell = styled.button<{ $grow?: number }>`
  display: flex;
  flex: ${(p) => p.$grow ?? 35} 1 0;
  align-items: center;
  justify-content: center;
  min-width: 0;
`;
const ToolSplit = styled.span`
  display: flex;
  flex: 8 1 0;
  justify-content: center;
  &::after { content: ""; width: 2px; margin: 3px 0; background: #a2a2a2; }
`;
const IconSlot = styled.span<{ $w: number; $split?: boolean }>`
  display: flex;
  flex: none;
  align-items: center;
  justify-content: center;
  width: ${(p) => p.$w}px;
  ${(p) => p.$split && css`&::before { content: ""; width: 2px; height: 26px; margin-right: ${p.$w > 20 ? 8 : 0}px; background: #a2a2a2; }`}
`;
const ComboBox = styled.label<{ $w?: number }>`
  display: flex;
  align-items: center;
  ${(p) => (p.$w ? css`flex: none; width: ${p.$w}px;` : css`flex: 1;`)}
  padding: 0 2px;
  border: 2px solid #111;
  border-width: 1px 2px;
  background: #4a4a4a;
  overflow: hidden;
`;
const ComboSelect = styled.select<{ $indent: number; $serif?: boolean }>`
  appearance: none;
  flex: 1;
  min-width: 0;
  height: 28px;
  padding-left: ${(p) => p.$indent}px;
  color: #717171;
  font-family: ${(p) => (p.$serif ? SERIF : UI)};
  font-size: 18px;
  opacity: 1;
`;
const Swatch = styled.span`
  width: 15px;
  height: 16px;
  margin-left: 4px;
  border: 1px solid #111;
  background: #fff;
`;
const Rule = styled.span<{ $w: number }>`
  width: ${(p) => p.$w}px;
  height: 1px;
  margin-left: 4px;
  background: #000;
`;
const ChevronBox = styled.span`
  display: flex;
  align-items: center;
  justify-content: center;
  width: 11px;
  height: 21px;
  background: #838383;
`;
const PlotStyle = styled.label`
  position: relative;
  display: flex;
  flex: 1;
  align-items: center;
  background: #fcfcfc;
  font-family: ${SERIF};
  font-size: 18px;
`;
const PlotSelect = styled.select`
  appearance: none;
  width: 100%;
  height: 28px;
  padding-left: 66px;
  color: #222;
`;
const Ghost = styled.span<{ $x: number; $strike?: boolean }>`
  position: absolute;
  left: ${(p) => p.$x}px;
  color: ${(p) => (p.$strike ? "#555" : "#bdbdbd")};
  text-decoration: ${(p) => (p.$strike ? "line-through" : "none")};
  pointer-events: none;
`;

const Chevron = () => (
  <ChevronBox>
    <svg width="9" height="7" viewBox="0 0 9 7"><path d="M1 1l3.500 4L8 1" fill="none" stroke="#b0b0b0" strokeWidth="1.300" /></svg>
  </ChevronBox>
);
const Arrow = ({ color = "#444" }: { color?: string }) => (
  <svg width="9" height="6" viewBox="0 0 9 6"><path d="M0 0h9L4.500 6z" fill={color} /></svg>
);

type ComboProps = { label: string; value: string; width?: number; indent?: number; serif?: boolean; lead?: React.ReactNode };
const Combo = ({ label, value, width, indent = 4, serif, lead }: ComboProps) => (
  <ComboBox $w={width}>
    {lead}
    <ComboSelect aria-label={label} $indent={indent} $serif={serif}><option>{value}</option></ComboSelect>
    <Chevron />
  </ComboBox>
);

const Tools = ({ names }: { names: string[] }) => (
  <>
    {names.map((n, i) => {
      if (n === "|") return <ToolSplit key={i} />;
      if (n === "v") return <ToolCell key={i} $grow={18} aria-label="more"><Arrow color="#8b8b8b" /></ToolCell>;
      return <ToolCell key={i} aria-label={n}><Icon name={n} /></ToolCell>;
    })}
  </>
);

/* ---------- drawing area ---------- */

const WorkArea = styled.main`
  display: flex;
  flex: 1;
  min-height: 0;
  gap: 6px;
  padding-right: 6px;
`;
const DrawingFrame = styled.section`
  display: grid;
  flex: 1;
  grid-template-columns: 1fr 27px;
  grid-template-rows: 1fr 25px;
  min-width: 0;
  border: solid #9a9a9a;
  border-width: 2px 0 0 2px;
  background: #efefef;
`;
const Canvas = styled.div`
  position: relative;
  min-height: 0;
  overflow: hidden;
  background: #808080;
`;
const CanvasDrawing = styled.svg`
  position: absolute;
  inset: 0;
  width: 100%;
  height: 100%;
`;
const ViewLabel = styled.div`
  position: absolute;
  left: 6px;
  top: 8px;
  color: #fff;
  font-size: 18px;
  line-height: 24px;
`;
const ViewCube = styled.div`
  position: absolute;
  right: 19px;
  top: 12px;
  width: 104px;
  height: 160px;
`;
const Compass = styled.span<{ $x: number; $y: number }>`
  position: absolute;
  left: ${(p) => p.$x}px;
  top: ${(p) => p.$y}px;
  color: #c4c4c4;
  font-size: 14px;
  line-height: 16px;
`;
const CubeFace = styled.button`
  position: absolute;
  left: 32px;
  top: 37px;
  width: 40px;
  height: 40px;
  border: 6px solid #c9c9c9;
  background: #bfc1c6;
  color: #777;
  font-size: 18px;
  line-height: 26px;
`;
const WcsButton = styled.button`
  position: absolute;
  left: 16px;
  top: 130px;
  display: flex;
  align-items: center;
  gap: 9px;
  width: 72px;
  height: 25px;
  padding: 0 0 2px 5px;
  border: 1px solid #c6c8d2;
  border-radius: 5px;
  background: #b4b6c2;
  color: #707070;
  font: 500 16px "Liberation Sans", sans-serif;
`;
const VScroll = styled.div`
  display: flex;
  align-items: flex-end;
  justify-content: center;
  padding: 0 0 25px 2px;
  border-right: 3px solid #fff;
  &::after { content: ""; width: 3px; height: 26px; background: #8c8c8c; }
`;
const BottomStrip = styled.div`
  grid-column: 1 / 3;
  display: flex;
  align-items: flex-start;
  padding-left: 2px;
  border-bottom: 2px solid #fff;
  overflow: hidden;
`;
const NavButton = styled.button`
  display: flex;
  align-items: center;
  justify-content: center;
  width: 21px;
  height: 21px;
  border: 1px solid #aaa;
  background: #f2f2f2;
`;
const LayoutTab = styled.button<{ $active?: boolean }>`
  height: 22px;
  padding: 0 11px 0 14px;
  clip-path: polygon(0 0, 100% 0, calc(100% - 8px) 100%, 8px 100%);
  background: ${(p) => (p.$active ? "#808080" : "#f2f2f2")};
  color: ${(p) => (p.$active ? "#fff" : "#111")};
  font-size: 18px;
  line-height: 22px;
`;
const HThumb = styled.span`
  align-self: center;
  width: 26px;
  height: 2px;
  margin: 0 595px 4px auto;
  background: #9a9a9a;
`;
const SideColumn = styled.div`
  display: flex;
  flex-direction: column;
  width: 37px;
`;
const SideGrip = styled.span`
  flex: none;
  height: 13px;
  border: 3px solid #555;
  border-width: 3px 8px 3px 6px;
  background: radial-gradient(circle, #161616 1px, transparent 1px) 0 0 / 3px 3px, #555;
`;
const SideTools = styled.div`
  display: flex;
  flex-direction: column;
  border: solid #444;
  border-width: 0 2px 1px;
  background: #ebebeb;
  margin-bottom: 2px;
`;
const SideButton = styled.button`
  display: flex;
  align-items: center;
  justify-content: center;
  height: 33px;
`;

/* ---------- command window and status bar ---------- */

const CommandWindow = styled.section`
  display: grid;
  grid-template-columns: 34px 1fr;
  grid-template-rows: 228px;
  margin-top: 7px;
  border-right: 1px solid #777;
`;
const CommandGutter = styled.div`
  display: flex;
  flex-direction: column;
  align-items: center;
  padding-top: 6px;
  background: linear-gradient(#969696, #3a3a3a);
`;
const GutterDots = styled.span`
  width: 26px;
  height: 9px;
  background: radial-gradient(circle, #c2c2c2 1px, transparent 1px) 0 0 / 4px 4px;
`;
const GutterButton = styled.button`
  display: flex;
  align-items: center;
  justify-content: center;
  width: 26px;
  height: 33px;
`;
const CommandBody = styled.div`
  display: flex;
  flex-direction: column;
  min-height: 0;
  border-top: 1px solid #8e8e8e;
`;
const History = styled.div`
  display: grid;
  grid-template-rows: repeat(8, minmax(0, 1fr));
  flex: 1;
  min-height: 0;
  padding: 9px 4px 2px;
  background: #c8c8c8;
  border-bottom: 1px solid #8a8a8a;
`;
const HistoryLine = styled.div`
  color: #151515;
  font-family: ${MONO};
  font-size: 17px;
  line-height: 22px;
  white-space: pre;
`;
const Han = styled.span`
  font-size: 20px;
  line-height: 1;
`;
const CommandLine = styled.label`
  display: flex;
  flex: none;
  align-items: center;
  gap: 6px;
  height: 36px;
  padding: 0 8px;
  border-bottom: 2px solid #555;
  background: #fff;
`;
const Prompt = styled.span`
  display: flex;
  align-items: center;
  justify-content: center;
  width: 22px;
  height: 20px;
  border: 1px solid #9aa0ab;
  background: #d5d9e2;
`;
const CommandInput = styled.input`
  flex: 1;
  padding: 2px 0 0 4px;
  font: bold 17px ${MONO};
  outline: none;
`;
const StatusBar = styled.footer`
  display: flex;
  height: 35px;
  border-top: 1px solid #222;
  border-bottom: 2px solid #1d1f22;
  background: linear-gradient(#959595, #787878);
`;
const Coordinates = styled.div`
  width: 309px;
  padding-left: 18px;
  border-right: 1px solid #444;
  color: #111;
  font: 15px ${MONO};
  line-height: 40px;
  white-space: pre;
`;
const StatusButton = styled.button<{ $w?: number; $on?: boolean; $pressed?: boolean }>`
  display: flex;
  flex: none;
  align-items: center;
  justify-content: center;
  gap: 4px;
  width: ${(p) => p.$w ?? 33}px;
  border-right: 1px solid #5c5c5c;
  background: ${(p) => (p.$on ? "linear-gradient(#dff2f6, #8fc6d6)" : p.$pressed ? "#777" : "linear-gradient(#bcbcbc, #9b9b9b)")};
  color: #111;
  font-family: ${UI};
  font-size: 17px;
`;
const ScaleText = styled.span`
  font: 15px ${MONO};
`;
const StatusSpacer = styled.span<{ $w?: number }>`
  ${(p) => (p.$w ? css`width: ${p.$w}px;` : css`flex: 1;`)}
  border-right: 1px solid #444;
`;
const Watermark = styled.div`
  position: absolute;
  right: 14px;
  bottom: 8px;
  color: rgba(245, 245, 245, 0.9);
  font: 20px/24px ${DLG};
  text-shadow: 1px 1px 1px #444;
  pointer-events: none;
`;

/* ---------- dialog ---------- */

const Dialog = styled.section`
  position: absolute;
  left: 211px;
  top: 205px;
  width: 943px;
  overflow: hidden;
  border-radius: 10px;
  background: #efefef;
  box-shadow: 0 0 2px rgba(0, 0, 0, 0.6), 0 20px 46px rgba(0, 0, 0, 0.5);
  color: #111;
  font: 16px ${DLG};
`;
const DialogTitle = styled.div`
  display: flex;
  align-items: center;
  height: 37px;
  padding: 0 17px 3px 5px;
  background: #fff;
`;
const DialogIcon = styled.span`
  display: flex;
  align-items: center;
  justify-content: center;
  width: 24px;
  height: 24px;
  background: linear-gradient(135deg, #e04040, #f6a0a0);
`;
const DialogName = styled.h1`
  flex: 1;
  margin: 0 0 0 5px;
  font: 18px ${UI};
  line-height: 34px;
`;
const DialogBody = styled.div`
  padding: 13px 12px 14px;
`;
const Tab = styled.button`
  display: block;
  height: 30px;
  width: 75px;
  padding-bottom: 2px;
  border: 1px solid #e4e4e4;
  border-bottom: 0;
  background: #f9f9f9;
`;
const TabPanel = styled.div`
  padding: 25px 10px 17px 17px;
  border: 1px solid #e4e4e4;
  background: #f9f9f9;
`;
const Lists = styled.div`
  display: flex;
  gap: 11px;
  height: 440px;
`;
const Tree = styled.ul`
  flex: none;
  width: 327px;
  margin: 0;
  padding: 1px 18px;
  list-style: none;
  border: 2px solid #8d929b;
  background: #fff;
`;
const TreeItem = styled.li`
  display: flex;
  align-items: center;
  gap: 2px;
  &::before { content: ""; width: 14px; border-top: 1px dotted #777; }
`;
const TreeLabel = styled.span`
  display: flex;
  justify-content: space-between;
  width: 183px;
  padding: 0 3px;
  background: #efefef;
  line-height: 24px;
`;
const FieldBox = styled.div`
  display: flex;
  flex: 1;
  justify-content: space-between;
  align-items: flex-start;
  padding: 1px;
  border: 2px solid #8d929b;
  background: #fff;
`;
const FieldTable = styled.table`
  width: 495px;
  height: 420px;
  border-collapse: separate;
  border-spacing: 0;
  table-layout: fixed;
`;
const HeadCell = styled.th<{ $w: number }>`
  width: ${(p) => p.$w}px;
  height: 37px;
  padding: 0 8px 2px;
  border-right: 1px solid #ddd;
  font-weight: normal;
  text-align: left;
`;
const Cell = styled.td`
  padding: 0 8px 0 6px;
  line-height: 25px;
  white-space: pre;
  & + & { padding-left: 9px; }
`;
const FieldName = styled.span<{ $sel?: boolean; $focus?: boolean }>`
  display: inline-block;
  padding: 0 2px;
  ${(p) => p.$sel && css`padding-right: 9px; background: #0078d7; color: #fff;`}
  ${(p) => p.$focus && css`outline: 1px dotted #f08a28; outline-offset: -1px;`}
`;
const ListScroll = styled.div`
  display: flex;
  justify-content: center;
  width: 24px;
  height: 434px;
  padding-top: 228px;
  background: #f0f0f0;
  &::after { content: ""; width: 3px; height: 180px; background: #868686; }
`;
const ButtonGrid = styled.div`
  display: grid;
  grid-template-columns: repeat(4, 121px);
  gap: 17px 14px;
  margin: 14px 0 0 12px;
`;
const PushButton = styled.button<{ $primary?: boolean }>`
  height: 31px;
  border: ${(p) => (p.$primary ? "2px solid #1a86dc" : "1px solid #cfcfcf")};
  border-radius: 5px;
  background: #fdfdfd;
  white-space: nowrap;
  &:disabled { color: #9c9c9c; border-color: #e6e6e6; background: #f9f9f9; }
`;
const Footer = styled.div`
  display: grid;
  grid-template-columns: 110px 110px;
  justify-content: end;
  gap: 13px;
  margin: 29px 10px 0 0;
`;

/* ---------- data ---------- */

const menus = ["文件(F)", "编辑(E)", "视图(V)", "插入(I)", "格式(O)", "工具(T)", "绘图(D)", "标注(N)", "修改(M)", "参数(P)", "窗口(W)", "Acrobat 标记(C)", "Adobe PDF(B)", "帮助(H)"];

const standardTools = ["page", "folder", "floppy", "|", "printer", "preview", "publish", "web", "|", "cut", "copy", "paste", "match", "blockEdit", "|", "undoOff", "v", "redoOff", "v", "|", "hand", "zoomRt", "zoomWin", "zoomPrev", "|", "props", "dcenter", "palettes", "sheets", "markup", "calc", "|", "helpBox"];
const viewTools = ["vportBox", "sphere", "sphereAdd", "sphereSub", "sphereOff", "|", "cubeBlue", "cubeDel"];
const drawTools = ["line", "ray", "pline", "polygon", "rect", "arc", "circle", "cloud", "spline", "ellipse", "ellArc", "insert", "block", "point", "hatch", "gradient", "region", "table", "mtext", "addSel"];
const modifyTools = ["erase", "copyObj", "mirror", "offset", "array", "move", "rotate", "scale", "stretch", "trim", "extend", "breakPt", "breakObj", "join", "chamfer", "fillet", "blend", "explode"];
const statusTools = ["snapInfer", "snapMode", "gridMode", "ortho", "polar", "osnap", "osnap3d", "otrack", "ducs", "dyn", "lwt", "transp", "quickProps", "selCycle", "annoMon"];
const activeModes = ["gridMode", "otrack", "transp"];

const fields: [string, string][] = [
  ["Visible", "True"],
  ["Block", "*Model_Space"],
  ["Is Planar", "True"],
  ["Clone For Dragging", "True"],
  ["------ AcDbCurve ------", ""],
  ["Is Closed", "False"],
  ["Is Periodic", "False"],
  ["Plane Type", "False"],
  ["------ AcDbArc ------", ""],
  ["Center Pt", "(152.7658, 52.8088, 0)"],
  ["Radius", "48.9405"],
  ["Start Angle", "359"],
  ["End Angle", "93"],
  ["Thickness", "0"],
  ["Normal", "(0, 0, 1)"],
];

const history = ["found", "select", "command", "found", "select", "command", "found", "select"];

const actions: [string, boolean][] = [
  ["DXF...", true], ["Extension Dict...", false], ["Document...", true], ["Database...", true],
  ["Xdata...", false], ["Reactors...", false], ["References...", true],
];

const origin = { x: 758, y: 483 };
const pitch = 34.56;
const minor = "#686b78";
const major = "#5c617a";

const GridLines = () => {
  const lines: React.ReactNode[] = [];
  for (let i = -21; i <= 70; i++) {
    const x = Math.round(origin.x + i * pitch) + 0.5;
    lines.push(<path key={`v${i}`} d={`M${x} 0V3000`} stroke={i === 0 ? "#2f8a3a" : i % 5 ? minor : major} />);
  }
  for (let i = -40; i <= 13; i++) {
    const y = Math.round(origin.y - i * pitch) - 0.5;
    if (i !== 0) lines.push(<path key={`h${i}`} d={`M0 ${y}H4000`} stroke={i % 5 ? minor : major} />);
  }
  return <g strokeWidth="1.300">{lines}<path d={`M${origin.x} ${origin.y - 0.5}H4000`} stroke="#8e3a3e" strokeWidth="1.600" /></g>;
};

const arcPath = () => {
  const at = (deg: number) => {
    const a = (deg * Math.PI) / 180;
    return `${(1285 + 170 * Math.cos(a)).toFixed(1)} ${(300 - 170 * Math.sin(a)).toFixed(1)}`;
  };
  return `M${at(93)}A170 170 0 0 1 ${at(-1)}`;
};

/* ---------- app ---------- */

export default function App() {
  return (
    <Page>
      <GlobalStyle />
      <Header>
        <AppButton aria-label="Application menu"><Logo size={36} /><Arrow color="#333" /></AppButton>
        <TitleBar>
          <QuickAccess>
            {["page", "folder", "floppy", "saveAs", "printer", "undo"].map((n) => (
              <QuickButton key={n} aria-label={n}><Icon name={n} /></QuickButton>
            ))}
            <QuickButton $w={17} aria-label="undo list"><Arrow /></QuickButton>
            <QuickButton aria-label="redo"><Icon name="redo" /></QuickButton>
            <QuickButton $w={17} aria-label="redo list"><Arrow /></QuickButton>
          </QuickAccess>
          <WorkspaceBox>
            <Icon name="gear" />
            <WorkspaceSelect aria-label="Workspace"><option>AutoCAD 经典</option></WorkspaceSelect>
            <svg width="12" height="7" viewBox="0 0 12 7"><path d="M0 0h12L6 7z" fill="#444" /></svg>
          </WorkspaceBox>
          <QuickButton $w={25} aria-label="customize">
            <svg width="12" height="10" viewBox="0 0 12 10"><path d="M0 0h12v2H0zM1 4h10L6 10z" fill="#111" /></svg>
          </QuickButton>
          <FileName>E:\test3-11\Drawing3.dxf</FileName>
          <QuickButton $w={22} aria-label="expand">
            <svg width="7" height="12" viewBox="0 0 7 12"><path d="M0 0l7 6-7 6z" fill="#111" /></svg>
          </QuickButton>
          <SearchInput aria-label="Search" placeholder="键入关键字或短语" />
          <QuickButton aria-label="search"><Icon name="binoculars" /></QuickButton>
          <QuickButton aria-label="account"><Icon name="user" /></QuickButton>
          <SignIn>登录</SignIn>
          <QuickButton $w={17} aria-label="account list"><Arrow /></QuickButton>
          <QuickButton $w={40} aria-label="exchange"><Icon name="exchange" /></QuickButton>
          <QuickButton $w={33} aria-label="cloud"><Icon name="a360" /></QuickButton>
          <QuickButton $w={13} aria-label="cloud list"><Arrow /></QuickButton>
          <BarSeparator />
          <QuickButton aria-label="help"><Icon name="help" /></QuickButton>
          <QuickButton $w={17} aria-label="help list"><Arrow /></QuickButton>
          <WindowButtons>
            <QuickButton $w={70} aria-label="minimize"><svg width="16" height="16" viewBox="0 0 16 16"><path d="M0 8h16" stroke="#777" /></svg></QuickButton>
            <QuickButton $w={70} aria-label="restore"><svg width="16" height="16" viewBox="0 0 16 16" fill="none" stroke="#777"><rect x="1" y="4" width="11" height="11" rx="1.500" /><path d="M4 1.500h8q3 0 3 3V12" /></svg></QuickButton>
            <QuickButton $w={70} aria-label="close"><svg width="16" height="16" viewBox="0 0 16 16"><path d="M1 1l14 14M15 1L1 15" stroke="#777" /></svg></QuickButton>
          </WindowButtons>
        </TitleBar>
        <MenuBar>
          {menus.map((m) => <MenuItem key={m}>{m}</MenuItem>)}
          <MdiButtons>
            <button aria-label="minimize drawing"><svg width="18" height="16" viewBox="0 0 18 16"><path d="M2 13h15" stroke="#222" strokeWidth="3" /></svg></button>
            <button aria-label="restore drawing"><svg width="18" height="16" viewBox="0 0 18 16" fill="none" stroke="#222" strokeWidth="1.600"><path d="M1 6h10v9H1zM6 5V1h11v9h-5" /><path d="M1 7h10M6 2h11" /></svg></button>
            <button aria-label="close drawing"><svg width="16" height="16" viewBox="0 0 16 16"><path d="M2 2l11 12M13 2L2 14" stroke="#222" strokeWidth="3.400" /></svg></button>
          </MdiButtons>
        </MenuBar>
      </Header>

      <ToolRows>
        <ToolRow>
          <Panel $w={82}><Grip /><Tools names={["pdf", "pdfNote"]} /></Panel>
          <Panel $w={968}><Grip /><Tools names={standardTools} /></Panel>
          <Panel>
            <Grip />
            <IconSlot $w={35}><Icon name="textStyle" /></IconSlot>
            <Combo label="Text style" value="Standard" width={177} indent={23} />
            <IconSlot $w={46} $split><Icon name="dimStyle" /></IconSlot>
            <Combo label="Dimension style" value="ISO-25" width={178} indent={23} />
            <IconSlot $w={46} $split><Icon name="tableStyle" /></IconSlot>
            <Combo label="Table style" value="Standard" width={178} />
            <IconSlot $w={46} $split><Icon name="leaderStyle" /></IconSlot>
            <ComboBox>
              <ComboSelect aria-label="Leader style" $indent={23}><option>Standard</option></ComboSelect>
            </ComboBox>
          </Panel>
        </ToolRow>

        <ToolRow>
          <Panel $w={344}>
            <Grip />
            <Combo label="Workspaces" value="AutoCAD 经典" width={263} indent={11} />
            <Tools names={["gear", "home"]} />
          </Panel>
          <Panel $w={601}>
            <Grip />
            <IconSlot $w={36}><Icon name="layerProps" /></IconSlot>
            <Combo
              label="Layer"
              value="0"
              width={448}
              indent={8}
              lead={<>
                <IconSlot $w={23}><Icon name="bulb" size={20} /></IconSlot>
                <IconSlot $w={24}><Icon name="sun" size={18} /></IconSlot>
                <IconSlot $w={26}><Icon name="vpFreeze" size={20} /></IconSlot>
                <IconSlot $w={26}><Icon name="unlock" size={20} /></IconSlot>
                <Swatch />
              </>}
            />
            <Tools names={["layerCurrent", "layerPrev", "layerState"]} />
          </Panel>
          <Panel $w={873}>
            <Grip />
            <Combo label="Color" value="ByLayer" width={224} indent={6} serif lead={<Swatch />} />
            <IconSlot $w={11} $split />
            <Combo label="Linetype" value="ByLayer" width={238} indent={6} serif lead={<Rule $w={89} />} />
            <IconSlot $w={11} $split />
            <Combo label="Lineweight" value="ByLayer" width={186} indent={6} serif lead={<Rule $w={52} />} />
            <IconSlot $w={11} $split />
            <PlotStyle>
              <Ghost $x={12} $strike>ByColor</Ghost>
              <PlotSelect aria-label="Plot style"><option>ByLayer</option></PlotSelect>
              <Ghost $x={103}>ByLayer</Ghost>
              <svg width="16" height="6" viewBox="0 0 16 6"><path d="M1 1l3 4 4-4 3 4 4-4" fill="none" stroke="#999" /></svg>
            </PlotStyle>
          </Panel>
        </ToolRow>

        <ToolRow>
          <Panel $w={263}><Grip /><Tools names={viewTools} /></Panel>
          <Panel $w={703}><Grip /><Tools names={drawTools} /></Panel>
        </ToolRow>
      </ToolRows>

      <WorkArea>
        <DrawingFrame>
          <Canvas>
            <CanvasDrawing>
              <GridLines />
              <path d={arcPath()} fill="none" stroke="#fff" strokeWidth="1.600" strokeDasharray="4.500 4.500" />
              <g fill="none" stroke="#ea1c1c" strokeWidth="3" strokeLinecap="round" strokeLinejoin="round">
                <path d="M1433 61.500C1415 61 1395 63 1370 69L1370 70L1378 77L1386 91L1392 102L1400 110L1407 121" />
                <path d="M1372 79.500L1380 79.500L1388 83L1406 93L1438 116L1454 131L1468 142L1483 159L1501 184L1514 199L1521 212L1535 230L1550 252L1551 257" />
              </g>
            </CanvasDrawing>
            <ViewLabel>[−][俯视][二维线框]</ViewLabel>
            <ViewCube>
              <svg width="104" height="112" viewBox="0 0 104 112"><circle cx="52" cy="57" r="45" fill="none" stroke="#999" strokeWidth="8" /></svg>
              <Compass $x={45} $y={3}>北</Compass>
              <Compass $x={-2} $y={49}>西</Compass>
              <Compass $x={91} $y={49}>东</Compass>
              <Compass $x={45} $y={97}>南</Compass>
              <CubeFace>上</CubeFace>
              <WcsButton>WCS<svg width="14" height="9" viewBox="0 0 14 9"><path d="M1 1h12L7 8z" fill="none" stroke="#999" /></svg></WcsButton>
            </ViewCube>
          </Canvas>
          <VScroll />
          <BottomStrip>
            {["M3 2v12M12 2L5 8l7 6z", "M11 2L4 8l7 6z", "M5 2l7 6-7 6z", "M4 2l7 6-7 6zM13 2v12"].map((d) => (
              <NavButton key={d} aria-label="layout navigation"><svg width="16" height="16" viewBox="0 0 16 16"><path d={d} fill="#666" stroke="#666" strokeWidth="1.300" /></svg></NavButton>
            ))}
            <LayoutTab $active>模型</LayoutTab>
            <LayoutTab>布局1</LayoutTab>
            <HThumb />
          </BottomStrip>
        </DrawingFrame>
        <SideColumn>
          <SideGrip />
          <SideTools>
            {modifyTools.map((n) => <SideButton key={n} aria-label={n}><Icon name={n} /></SideButton>)}
          </SideTools>
          <SideGrip />
        </SideColumn>
      </WorkArea>

      <CommandWindow>
        <CommandGutter>
          <GutterDots />
          <GutterButton aria-label="close command window"><svg width="14" height="14" viewBox="0 0 14 14"><path d="M1 1l12 12M13 1L1 13" stroke="#f0f0f0" strokeWidth="2.800" /></svg></GutterButton>
          <GutterButton aria-label="customize command window"><Icon name="wrench" size={22} /></GutterButton>
        </CommandGutter>
        <CommandBody>
          <History>
            {history.map((kind, i) => (
              <HistoryLine key={i}>
                {kind === "command" && <><Han>命令</Han>: ArxDbgSnoopEnts</>}
                {kind === "select" && <><Han>选择对象</Han>:</>}
                {kind === "found" && <><Han>选择对象</Han>: <Han>找到</Han> 1 <Han>个</Han></>}
              </HistoryLine>
            ))}
          </History>
          <CommandLine>
            <Prompt><svg width="16" height="12" viewBox="0 0 16 12"><path d="M1 1l5 5-5 5M8 11h7" fill="none" stroke="#555" strokeWidth="1.600" /></svg></Prompt>
            <Arrow color="#8b8b8b" />
            <CommandInput aria-label="Command" defaultValue="SNOOPENTS" />
          </CommandLine>
        </CommandBody>
      </CommandWindow>

      <StatusBar>
        <Coordinates>178.3062, 52.3877, 0.0000</Coordinates>
        {statusTools.map((n) => (
          <StatusButton key={n} aria-label={n} $on={activeModes.includes(n)}><Icon name={n} /></StatusButton>
        ))}
        <StatusSpacer />
        <StatusButton $w={45}>模型</StatusButton>
        <StatusButton aria-label="layout"><Icon name="layoutBtn" size={22} /></StatusButton>
        <StatusButton aria-label="quick view"><Icon name="qview" size={22} /></StatusButton>
        <StatusSpacer $w={27} />
        <StatusButton $w={81}><Icon name="person" size={22} /><ScaleText>1:1</ScaleText><Arrow color="#000" /></StatusButton>
        <StatusButton aria-label="annotation visibility"><Icon name="personSun" size={22} /></StatusButton>
        <StatusButton aria-label="annotation auto scale"><Icon name="personOff" size={22} /></StatusButton>
        <StatusSpacer $w={9} />
        <StatusButton aria-label="workspace switching"><Icon name="gear" size={22} /></StatusButton>
        <StatusButton aria-label="lock interface"><Icon name="lockUi" size={22} /></StatusButton>
        <StatusButton aria-label="hardware acceleration"><Icon name="hardware" size={22} /></StatusButton>
        <StatusButton $w={48} $pressed aria-label="isolate objects"><Icon name="bulb" /></StatusButton>
        <StatusButton $w={16} aria-label="status menu"><Arrow color="#111" /></StatusButton>
        <StatusButton $w={36} aria-label="clean screen"><Icon name="cleanScreen" size={22} /></StatusButton>
      </StatusBar>

      <Dialog role="dialog" aria-label="Selected Entities">
        <DialogTitle>
          <DialogIcon><Logo size={18} /></DialogIcon>
          <DialogName>Selected Entities</DialogName>
          <button aria-label="close dialog"><svg width="16" height="16" viewBox="0 0 16 16"><path d="M1 1l14 14M15 1L1 15" stroke="#111" strokeWidth="1.500" /></svg></button>
        </DialogTitle>
        <DialogBody>
          <Tab>Entities</Tab>
          <TabPanel>
            <Lists>
              <Tree>
                <TreeItem><TreeLabel><span>&lt;AcDbArc</span><span>24F &gt;</span></TreeLabel></TreeItem>
              </Tree>
              <FieldBox>
                <FieldTable>
                  <thead><tr><HeadCell $w={259}>Field</HeadCell><HeadCell $w={236}>Value</HeadCell></tr></thead>
                  <tbody>
                    {fields.map(([name, value]) => (
                      <tr key={name}>
                        <Cell><FieldName $sel={name.endsWith("Angle")} $focus={name === "End Angle"}>{name}</FieldName></Cell>
                        <Cell>{value}</Cell>
                      </tr>
                    ))}
                  </tbody>
                </FieldTable>
                <ListScroll />
              </FieldBox>
            </Lists>
            <ButtonGrid>
              {actions.map(([name, on]) => <PushButton key={name} disabled={!on}>{name}</PushButton>)}
            </ButtonGrid>
          </TabPanel>
          <Footer>
            <PushButton $primary>OK</PushButton>
            <PushButton>Cancel</PushButton>
          </Footer>
        </DialogBody>
      </Dialog>
      <Watermark>CSDN @averagePerson</Watermark>
    </Page>
  );
}
